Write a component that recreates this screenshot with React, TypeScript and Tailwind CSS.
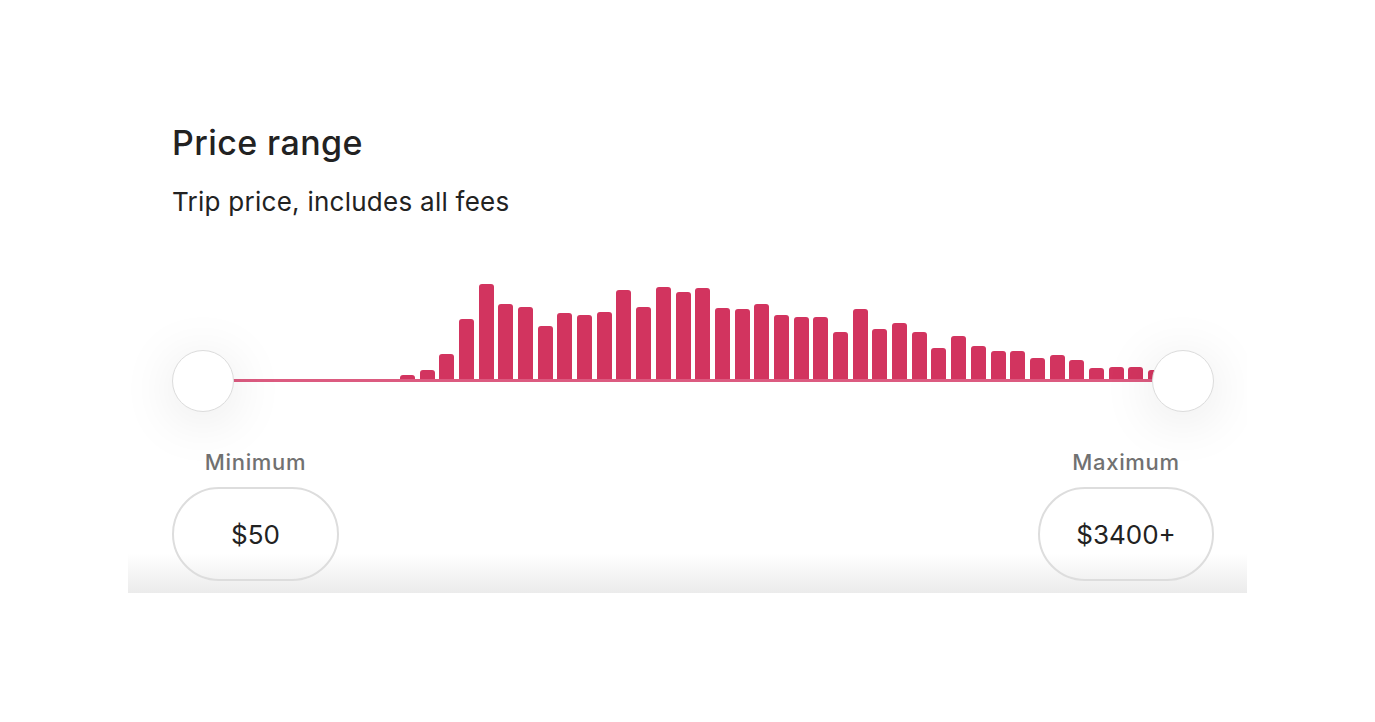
const BAR_HEIGHTS = [
  0, 0, 0, 0, 0, 0, 0, 0, 0, 0,
  5, 10, 26, 61, 96, 76, 73, 54, 67, 65,
  68, 90, 73, 93, 88, 92, 72, 71, 76, 65,
  63, 63, 48, 71, 51, 57, 48, 32, 44, 34,
  29, 29, 22, 25, 20, 12, 13, 13, 10, 8,
];

function Thumb({ side }: { side: "left" | "right" }) {
  return (
    <div
      className={`absolute top-[70px] size-[62px] rounded-full border border-[#dcdcdc] bg-white shadow-[0_8px_56px_rgba(0,0,0,0.1)] ${
        side === "left" ? "left-0" : "right-0"
      }`}
    />
  );
}

function PriceBox({
  label,
  value,
  width,
}: {
  label: string;
  value: string;
  width: string;
}) {
  return (
    <div className="flex flex-col items-center">
      <span className="text-[22px] leading-[28px] font-medium tracking-[0.03em] text-[#717171]">
        {label}
      </span>
      <div
        className={`mt-[11px] flex h-[94px] items-center justify-center rounded-full border-2 border-[#dddddd] pt-[1px] text-[26px] text-[#222222] ${width}`}
      >
        {value}
      </div>
    </div>
  );
}

export default function App() {
  return (
    <div className="min-h-screen bg-white font-['Inter','Noto_Sans',sans-serif]">
      <div className="pt-[80px]">
        <section className="ml-[128px] w-[1119px] overflow-hidden bg-[linear-gradient(to_bottom,#ffffff_calc(100%-40px),#ebebeb)] pt-[45px] pr-[33px] pb-[12px] pl-[44px]">
          <h2 className="text-[34px] leading-[36px] font-medium tracking-[0.012em] text-[#222222]">
            Price range
          </h2>
          <p className="mt-[25px] text-[26px] leading-[32px] tracking-[0.01em] text-[#222222]">
            Trip price, includes all fees
          </p>

          <div className="relative mt-[62px] h-[132px]">
            <div className="absolute top-0 left-[31px] flex h-[100px] w-[980px] items-end gap-[4.7px]">
              {BAR_HEIGHTS.map((h, i) => (
                <div
                  key={i}
                  className="w-[15px] shrink-0 rounded-t-[3px] bg-[#d2345f]"
                  style={{ height: h }}
                />
              ))}
            </div>
            <div className="absolute top-[99px] left-[31px] h-[3px] w-[980px] bg-[#dc5b80]" />
            <Thumb side="left" />
            <Thumb side="right" />
          </div>

          <div className="mt-[36px] flex items-start justify-between">
            <PriceBox label="Minimum" value="$50" width="w-[167px]" />
            <PriceBox label="Maximum" value="$3400+" width="w-[176px]" />
          </div>
        </section>
      </div>
    </div>
  );
}
